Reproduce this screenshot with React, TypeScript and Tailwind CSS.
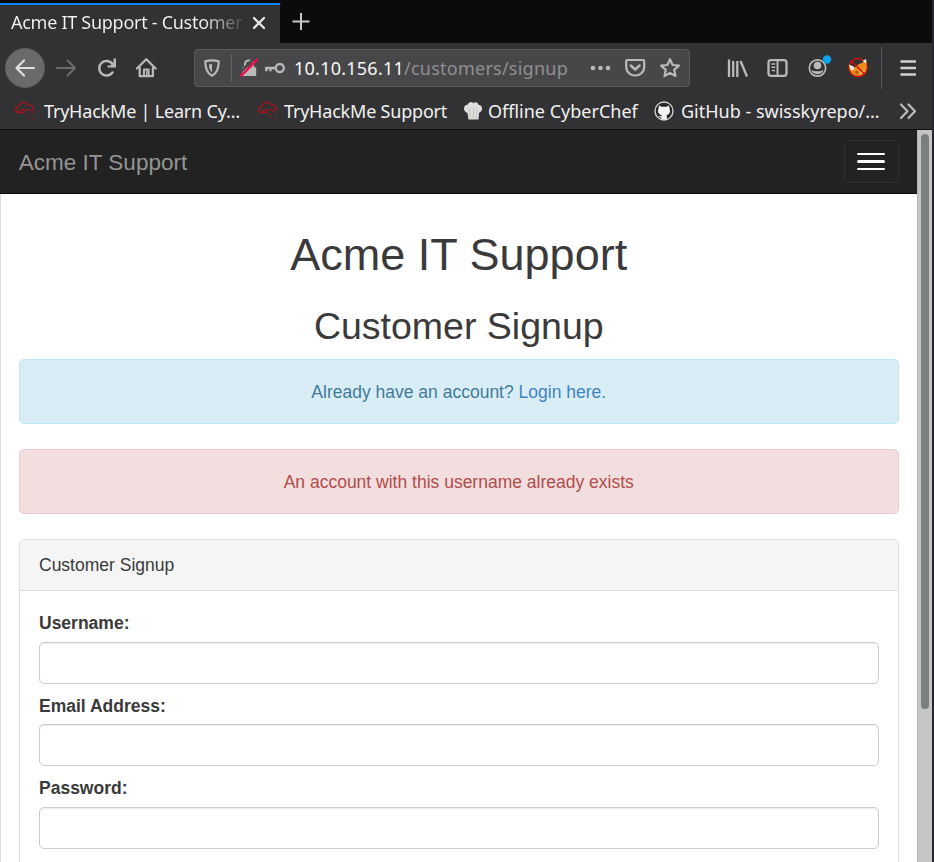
import type { ReactNode } from "react";

function Icon({ className = "", children }: { className?: string; children: ReactNode }) {
  return (
    <svg
      viewBox="0 0 30 30"
      fill="none"
      stroke="currentColor"
      strokeWidth="2"
      strokeLinecap="round"
      strokeLinejoin="round"
      className={`size-[30px] shrink-0 ${className}`}
    >
      {children}
    </svg>
  );
}

function TabStrip() {
  return (
    <div className="flex h-[43px] bg-[#0b0b0c] pt-[3px]">
      <div className="flex w-[280px] items-center border-t-2 border-[#0a84ff] bg-[#323234] pl-[11px]">
        <span className="mb-[3px] w-[234px] overflow-hidden whitespace-nowrap bg-gradient-to-r from-[#f4f4f4] from-82% to-[#f4f4f4]/5 bg-clip-text text-[18px] tracking-[-0.28px] text-transparent">
          Acme IT Support - Customer
        </span>
        <Icon className="-ml-[1px] mb-[2px] text-[#e8e8e8]">
          <path d="M10 10l10 10M20 10l-10 10" strokeWidth="2.300" />
        </Icon>
      </div>
      <Icon className="ml-[6px] mt-[3px] text-[#c8c8c8]">
        <path d="M15 7v17M6.500 15.500h17" strokeLinecap="butt" />
      </Icon>
    </div>
  );
}

function AddressBar() {
  return (
    <div className="ml-[33px] flex h-[38px] w-[496px] shrink-0 items-center rounded-[4px] border border-[#5b5b5d] bg-[#474749]">
      <Icon className="ml-[2px]">
        <path d="M15 7.300c2.500 0 4.800.4 6.700 1.100 0 6.500-1 11.500-6.700 14.300-5.700-2.800-6.700-7.800-6.700-14.300 1.900-.7 4.200-1.100 6.700-1.100z" strokeWidth="2.200" />
        <path d="M12 11.500l3-.6v8.300c-2.200-1.800-3-4-3-7.700z" fill="currentColor" stroke="none" />
      </Icon>
      <div className="ml-[4px] h-[28px] w-px bg-[#5f6468]" />
      <Icon className="ml-[2px]">
        <path d="M11 14v-2.500c0-5.300 8-5.300 8 0V14" />
        <path d="M8 14.200h14.200v8.800H8z" fill="currentColor" stroke="none" />
        <path d="M5 20.500L20.500 5" stroke="#474749" strokeWidth="2.500" strokeLinecap="butt" />
        <path d="M6.500 23.300L23.500 6.200" stroke="#f20b4b" strokeWidth="2.400" strokeLinecap="butt" />
      </Icon>
      <Icon className="-ml-[5px]">
        <circle cx="20.800" cy="15" r="4" strokeWidth="2.300" />
        <path d="M17 15H6M7.300 15v3.200M11.500 15v3.200" strokeWidth="2.300" strokeLinecap="butt" />
      </Icon>
      <span className="ml-[5px] w-[282px] whitespace-nowrap text-[18px] tracking-[0.24px] text-[#8f8f91]">
        <span className="text-[#f7f7f7]">10.10.156.11</span>/customers/signup
      </span>
      <Icon className="ml-[9px]">
        <g fill="currentColor" stroke="none">
          <circle cx="8" cy="15" r="2.300" />
          <circle cx="15.500" cy="15" r="2.300" />
          <circle cx="23" cy="15" r="2.300" />
        </g>
      </Icon>
      <Icon className="ml-[5px]">
        <path d="M7.500 7h15.500a1.200 1.200 0 0 1 1.200 1.200v5.300c0 12-18 12-18 0V8.200A1.200 1.200 0 0 1 7.500 7z" strokeWidth="2.200" />
        <path d="M10.800 12.500l4.400 4 4.400-4" strokeWidth="2.400" />
      </Icon>
      <Icon className="ml-[5px]">
        <path d="M15 6.200l2.600 5.800 6.300.7-4.700 4.200 1.300 6.200-5.500-3.200-5.500 3.200 1.300-6.200-4.700-4.200 6.300-.7z" strokeWidth="2.200" />
      </Icon>
    </div>
  );
}

function Toolbar() {
  return (
    <div className="flex h-[50px] items-center text-[#b9b9ba]">
      <div className="ml-[5px] flex size-[40px] shrink-0 items-center justify-center rounded-full border border-[#5f5f61] bg-[#6a6a6b] text-[#dedede]">
        <Icon>
          <path d="M24 15H6.500M14 7.500L6.500 15l7.500 7.500" strokeWidth="2.200" />
        </Icon>
      </div>
      <Icon className="ml-[6px] text-[#6c6c6e]">
        <path d="M6 15h18M16.500 7.500L24 15l-7.500 7.500" />
      </Icon>
      <Icon className="ml-[11px]">
        <path d="M20.500 19.500a7.300 7.300 0 1 1 .2-8.200" strokeWidth="2.500" />
        <path d="M24 5.500v9h-8.500v-2h3l3-3.500V5.500z" fill="currentColor" stroke="none" />
      </Icon>
      <Icon className="ml-[9px]">
        <path d="M5.900 15.500L15.300 6.300l9.400 9.200" strokeWidth="2.300" />
        <path d="M8.700 15v8.200h13.200V15" strokeWidth="2.300" />
        <path d="M13 23v-6.500h4.600V23" />
        <path d="M15.800 18v4" strokeWidth="1.500" />
      </Icon>
      <AddressBar />
      <Icon className="ml-[32px]">
        <path d="M7 6.500v17.500M11.200 8v16M15.300 8v16M18.500 8l6.500 15.500" strokeWidth="2.300" strokeLinecap="butt" />
      </Icon>
      <Icon className="ml-[10px]">
        <rect x="6.500" y="7.200" width="18" height="15.600" rx="2.500" strokeWidth="2.300" />
        <path d="M15.500 7v16" />
        <path d="M9.300 11h4M9.300 14.300h4M10 17.500h3" strokeWidth="1.400" strokeLinecap="butt" />
      </Icon>
      <Icon className="ml-[10px]">
        <circle cx="15.500" cy="15" r="8.200" strokeWidth="1.700" />
        <circle cx="15.500" cy="12.500" r="3.800" fill="currentColor" stroke="none" />
        <path d="M9.500 17c2.500 1.800 9.500 1.800 12 0-.8 5.500-11.200 5.500-12 0z" fill="currentColor" stroke="none" />
        <circle cx="25" cy="6.500" r="4.200" fill="#0ea2e8" stroke="none" />
      </Icon>
      <Icon className="ml-[11px]">
        <circle cx="15" cy="14.500" r="9" stroke="#d1120f" strokeWidth="1.500" />
        <g stroke="none">
          <path d="M6 12l5.500 2.500L16 11l4-1.500 3-3 .8 8.500c-.5 4-4 7.500-8.800 7.700-5.500 0-9-4.500-9-10.700z" fill="#ee8c19" />
          <path d="M6 11.500l4.500 2 1 3-3.500 1zM19.500 8l3.500-2 .5 4.500z" fill="#f5ede2" />
          <path d="M16.500 18.500l6-1.500-2 3.500-4 1z" fill="#f8b04c" />
          <path d="M11.500 19l2.500-1.500 2 2.500-2.500 1z" fill="#b5560f" />
        </g>
        <path d="M8.600 8.200l12.800 12.800" stroke="#d1120f" strokeWidth="1.500" />
      </Icon>
      <div className="ml-[8px] h-[42px] w-px bg-[#59595b]" />
      <Icon className="ml-[11px] text-[#d2d2d2]">
        <path d="M7.500 8.500h15.500M7.500 15h15.500M7.500 21.500h15.500" strokeWidth="2.300" strokeLinecap="butt" />
      </Icon>
    </div>
  );
}

function CloudMark() {
  return (
    <svg viewBox="0 0 22 22" fill="none" stroke="#a3151c" strokeWidth="1.500" className="size-[22px] shrink-0">
      <path d="M10 12.500H5.500C.6 12.500.5 7.200 4.800 7 5.500 1.500 12 1 13.700 4.500c4-.3 5.800 2.500 5 5.500" />
      <path d="M5 12.500c1-3 4-3.500 5.500-1.500 2-2.500 4.500-2 5.500 0" strokeWidth="1.200" />
      <path d="M14.500 10.500h6M11 14h4M17 13h3.500M12.500 17h3M17.500 18.500h3" strokeWidth="1.100" opacity=".65" />
    </svg>
  );
}

function BookmarksBar() {
  return (
    <div className="flex h-[36px] items-center whitespace-nowrap text-[18px] text-[#f1f1f1]">
      <span className="w-[14px] shrink-0" />
      <CloudMark />
      <span className="ml-[8px] w-[214px] shrink-0 tracking-[-0.2px]">TryHackMe | Learn Cy…</span>
      <span className="-ml-px flex shrink-0">
        <CloudMark />
      </span>
      <span className="ml-[5px] w-[179px] shrink-0 tracking-[-0.2px]">TryHackMe Support</span>
      <svg viewBox="0 0 20 20" className="size-[20px] shrink-0">
        <path d="M4.500 12C-.5 10.500 0 4 4.500 3.800 6 .5 9 .5 10.300 2.200c2-1.700 4.800-.8 5.200 1.600 4.500.4 5 6.200.5 8.200l-.5 6.500h-10z" fill="#dededc" />
        <path d="M6.800 7.500l.6 10M10.500 6.500v11M13.800 7.500l-.5 10" stroke="#c2c2c0" />
      </svg>
      <span className="ml-[5px] w-[165px] shrink-0">Offline CyberChef</span>
      <svg viewBox="0 0 22 22" className="size-[22px] shrink-0">
        <circle cx="11" cy="11" r="9" fill="#29292b" stroke="#d8d8d8" strokeWidth="1.300" />
        <path d="M6 5.500l2.700 1.300h4.600L16 5.500l.6 3.300c1.200 3.500-.2 5.700-3 6.200l.4 4.600H8.300v-2.200c-1.500.2-2.300-.4-3-1.900 1.200.1 1.500 1 3 .7l.3-1.200c-3-.5-4.300-3-3.200-6.200z" fill="#f5f5f5" />
      </svg>
      <span className="ml-[6px] w-[213px] shrink-0">GitHub - swisskyrepo/…</span>
      <Icon className="-ml-[1px] text-[#b9b9ba]">
        <path d="M8 8.500l6.500 6.700L8 22M15.500 8.500l6.500 6.700-6.500 6.800" strokeWidth="2.300" />
      </Icon>
    </div>
  );
}

function Field({ label, type }: { label: string; type: string }) {
  return (
    <label className="mb-[9px] block">
      <span className="mb-[5.500px] block pt-px font-bold leading-[25px]">{label}</span>
      <input
        type={type}
        className="block h-[42px] w-full rounded-[5px] border border-[#ccc] bg-white px-4 shadow-[inset_0_1px_1px_rgba(0,0,0,0.075)] outline-none"
      />
    </label>
  );
}

function SignupPage() {
  return (
    <main className="h-full w-[917px] overflow-hidden bg-white font-['Liberation_Sans',Arial,sans-serif] text-[17.5px] leading-[25px] text-[#3a3a3a]">
      <nav className="flex h-[64px] items-center justify-between border-b border-[#080808] bg-[#222] pl-[18.75px] pr-[18.500px]">
        <span className="pt-[2px] text-[22.5px] text-[#959595]">Acme IT Support</span>
        <button className="flex h-[43px] w-[55px] flex-col items-center justify-center gap-[5px] rounded-[5px] border border-[#303030]">
          <span className="h-[2.500px] w-[28px] rounded-sm bg-white" />
          <span className="h-[2.500px] w-[28px] rounded-sm bg-white" />
          <span className="h-[2.500px] w-[28px] rounded-sm bg-white" />
        </button>
      </nav>
      <div className="h-[669px] border-l border-[#ddd] pl-[18px] pr-[18.500px]">
        <h1 className="pt-[36px] text-center text-[45px] leading-[49px]">Acme IT Support</h1>
        <h2 className="mt-[27px] text-center text-[37.5px] leading-[41px]">Customer Signup</h2>
        <div className="mt-[12px] flex h-[65px] items-center justify-center rounded-[5px] border border-[#bce8f1] bg-[#d9edf7] pt-[2px] text-[#3f7b98]">
          <p>
            Already have an account? <a className="text-[#3f83bf]">Login here.</a>
          </p>
        </div>
        <div className="mt-[25px] flex h-[65px] items-center justify-center rounded-[5px] border border-[#ebccd1] bg-[#f2dede] pt-[2px] text-[#b14c4b]">
          An account with this username already exists
        </div>
        <section className="mt-[25px] h-[500px] rounded-[5px] border border-[#ddd] shadow-[0_1px_1px_rgba(0,0,0,0.05)]">
          <header className="flex h-[51px] items-center rounded-t-[4px] border-b border-[#ddd] bg-[#f5f5f5] px-[19px] pt-px">
            Customer Signup
          </header>
          <form className="px-[19px] pt-[19px]">
            <Field label="Username:" type="text" />
            <Field label="Email Address:" type="email" />
            <Field label="Password:" type="password" />
          </form>
        </section>
      </div>
    </main>
  );
}

export default function App() {
  return (
    <div className="flex h-[862px] w-[934px] overflow-hidden bg-[#262733]">
      <div className="flex w-[932px] shrink-0 flex-col bg-[#323234] font-['Noto_Sans',sans-serif]">
        <TabStrip />
        <Toolbar />
        <BookmarksBar />
        <div className="flex h-[733px] border-t border-[#0c0c0d]">
          <SignupPage />
          <div className="flex w-[15px] justify-center border-l border-[#b2b4b4] bg-[#c3c6c5] pt-[4px]">
            <div className="h-[575px] w-[8px] rounded-full bg-[#7b7f80]" />
          </div>
        </div>
      </div>
    </div>
  );
}
